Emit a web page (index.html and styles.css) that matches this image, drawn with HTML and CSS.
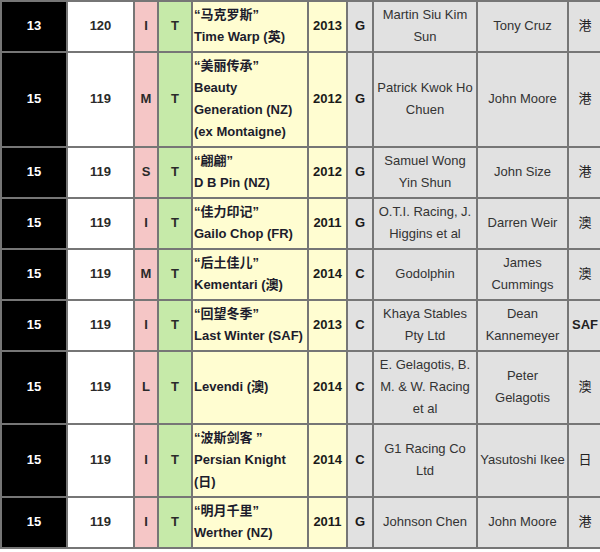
FILE: index.html
```html
<!DOCTYPE html>
<html lang="zh-CN">
<head>
<meta charset="utf-8">
<title>Ratings</title>
<link rel="stylesheet" href="styles.css">
</head>
<body>
<div class="table">
  <div class="row">
    <div class="c rank">13</div><div class="c rating">120</div><div class="c dist">I</div><div class="c surf">T</div>
    <div class="c name"><span class="cn">“马克罗斯”</span><span>Time Warp (英)</span></div>
    <div class="c year">2013</div><div class="c sex">G</div>
    <div class="c owner">Martin Siu Kim Sun</div><div class="c trainer">Tony Cruz</div><div class="c ctry">港</div>
  </div>
  <div class="row">
    <div class="c rank">15</div><div class="c rating">119</div><div class="c dist">M</div><div class="c surf">T</div>
    <div class="c name"><span class="cn">“美丽传承”</span><span>Beauty Generation (NZ) (ex Montaigne)</span></div>
    <div class="c year">2012</div><div class="c sex">G</div>
    <div class="c owner">Patrick Kwok Ho Chuen</div><div class="c trainer">John Moore</div><div class="c ctry">港</div>
  </div>
  <div class="row">
    <div class="c rank">15</div><div class="c rating">119</div><div class="c dist">S</div><div class="c surf">T</div>
    <div class="c name"><span class="cn">“翩翩”</span><span>D B Pin (NZ)</span></div>
    <div class="c year">2012</div><div class="c sex">G</div>
    <div class="c owner">Samuel Wong Yin Shun</div><div class="c trainer">John Size</div><div class="c ctry">港</div>
  </div>
  <div class="row">
    <div class="c rank">15</div><div class="c rating">119</div><div class="c dist">I</div><div class="c surf">T</div>
    <div class="c name"><span class="cn">“佳力印记”</span><span>Gailo Chop (FR)</span></div>
    <div class="c year">2011</div><div class="c sex">G</div>
    <div class="c owner">O.T.I. Racing, J. Higgins et al</div><div class="c trainer">Darren Weir</div><div class="c ctry">澳</div>
  </div>
  <div class="row">
    <div class="c rank">15</div><div class="c rating">119</div><div class="c dist">M</div><div class="c surf">T</div>
    <div class="c name"><span class="cn">“后土佳儿”</span><span>Kementari (澳)</span></div>
    <div class="c year">2014</div><div class="c sex">C</div>
    <div class="c owner">Godolphin</div><div class="c trainer">James Cummings</div><div class="c ctry">澳</div>
  </div>
  <div class="row">
    <div class="c rank">15</div><div class="c rating">119</div><div class="c dist">I</div><div class="c surf">T</div>
    <div class="c name"><span class="cn">“回望冬季”</span><span>Last Winter (SAF)</span></div>
    <div class="c year">2013</div><div class="c sex">C</div>
    <div class="c owner">Khaya Stables Pty Ltd</div><div class="c trainer">Dean Kannemeyer</div><div class="c ctry bold">SAF</div>
  </div>
  <div class="row">
    <div class="c rank">15</div><div class="c rating">119</div><div class="c dist">L</div><div class="c surf">T</div>
    <div class="c name"><span>Levendi (澳)</span></div>
    <div class="c year">2014</div><div class="c sex">C</div>
    <div class="c owner">E. Gelagotis, B. M. &amp; W. Racing et al</div><div class="c trainer">Peter Gelagotis</div><div class="c ctry">澳</div>
  </div>
  <div class="row">
    <div class="c rank">15</div><div class="c rating">119</div><div class="c dist">I</div><div class="c surf">T</div>
    <div class="c name"><span class="cn">“波斯剑客 ”</span><span>Persian Knight (日)</span></div>
    <div class="c year">2014</div><div class="c sex">C</div>
    <div class="c owner">G1 Racing Co Ltd</div><div class="c trainer">Yasutoshi Ikee</div><div class="c ctry">日</div>
  </div>
  <div class="row">
    <div class="c rank">15</div><div class="c rating">119</div><div class="c dist">I</div><div class="c surf">T</div>
    <div class="c name"><span class="cn">“明月千里”</span><span>Werther (NZ)</span></div>
    <div class="c year">2011</div><div class="c sex">G</div>
    <div class="c owner">Johnson Chen</div><div class="c trainer">John Moore</div><div class="c ctry">港</div>
  </div>
</div>
</body>
</html>
```

FILE: styles.css
```css
html, body {
  margin: 0;
  padding: 0;
  background: #ffffff;
  overflow: hidden;
}

body {
  font-family: "Liberation Sans", Arial, "Noto Sans CJK SC", sans-serif;
  font-size: 13px;
  line-height: 22px;
  color: #222222;
}

.table {
  display: grid;
  grid-template-columns: 64px 65px 22px 32px 114px 37px 24px 102px 89px 32px;
  gap: 2px;
  padding: 2px;
  background: #767676;
  width: max-content;
}

.row {
  display: contents;
}

.c {
  display: flex;
  flex-direction: column;
  justify-content: center;
  align-items: center;
  text-align: center;
  padding: 2px 1px 3px;
  box-sizing: border-box;
}

.rank {
  background: #000000;
  color: #ffffff;
  font-weight: bold;
}

.rating {
  background: #ffffff;
  color: #2a2a2a;
  font-weight: bold;
}

.dist {
  background: #f5c6c6;
  color: #2a2a2a;
  font-weight: bold;
}

.surf {
  background: #c6eaa9;
  color: #2a2a2a;
  font-weight: bold;
}

.name {
  background: #fffdd1;
  color: #1c1c2c;
  font-weight: bold;
  align-items: flex-start;
  text-align: left;
}

.name .cn {
  display: block;
}

.year {
  background: #fffdd1;
  color: #1a1a1a;
  font-weight: bold;
}

.sex {
  background: #e1e1e1;
  color: #1a1a1a;
  font-weight: bold;
}

.owner,
.trainer {
  background: #e1e1e1;
  color: #333333;
}

.ctry {
  background: #e1e1e1;
  color: #222222;
}

.ctry.bold {
  font-weight: bold;
}
```
